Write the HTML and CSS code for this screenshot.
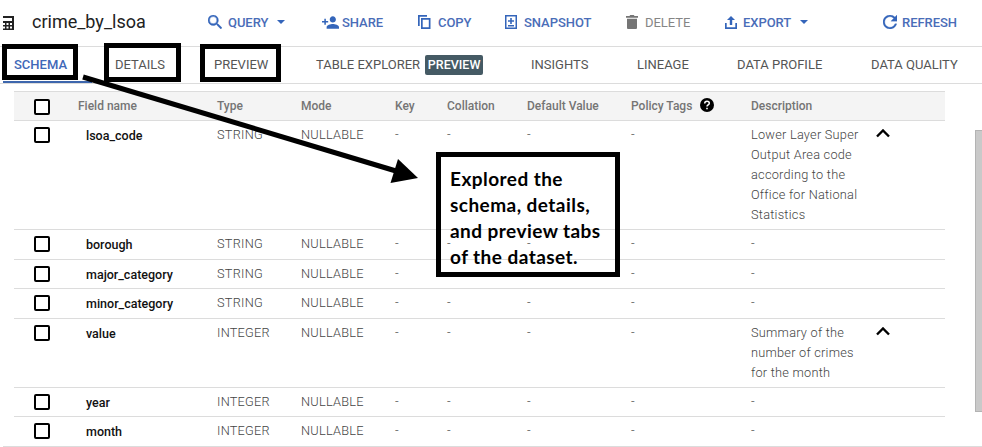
FILE: index.html
```html
<!DOCTYPE html>
<html lang="en">
<head>
<meta charset="utf-8">
<title>crime_by_lsoa</title>
<link rel="stylesheet" href="styles.css">
</head>
<body>
<header class="toolbar">
  <svg class="table-icon" width="11" height="14" viewBox="0 0 11 14"><path fill="#222" fill-rule="evenodd" d="M0 0h11v14H0v-1.500h2v-2H0V9h2V7H0V5h9V2H0zM3.500 7v2h2V7zM7 7v2h2V7zM3.500 10.500v2h2v-2zM7 10.500v2h2v-2z"/></svg>
  <h1 class="title">crime_by_lsoa</h1>
  <button class="action query"><svg width="14" height="14" viewBox="3 3 17.5 17.5"><path stroke-width=".5" stroke="currentColor" d="M15.5 14h-.79l-.28-.27A6.47 6.47 0 0 0 16 9.5 6.5 6.5 0 1 0 9.5 16c1.61 0 3.09-.59 4.23-1.57l.27.28v.79l5 4.99L20.49 19zM9.5 14a4.5 4.5 0 1 1 0-9 4.5 4.5 0 0 1 0 9z"/></svg><span>QUERY</span><i class="caret"></i></button>
  <button class="action share"><svg width="17" height="13" viewBox="1 4 22 16"><path d="M15 12c2.21 0 4-1.79 4-4s-1.79-4-4-4-4 1.79-4 4 1.790 4 4 4zM6 10V7H4v3H1v2h3v3h2v-3h3v-2zm9 4c-2.670 0-8 1.340-8 4v2h16v-2c0-2.660-5.330-4-8-4z"/></svg><span>SHARE</span></button>
  <button class="action copy"><svg width="13" height="14" viewBox="0 0 13 14"><path fill-rule="evenodd" d="M0 0h9v1.700H1.700V11H0zM3 3h9.500v11H3zM4.700 4.700v7.600h6.100V4.700z"/></svg><span>COPY</span></button>
  <button class="action snapshot"><svg width="12" height="14" viewBox="0 0 12 14"><path fill-rule="evenodd" d="M0 0h12v14H0zM1.500 1.500v11h9v-11zM5.200 3h1.600v2.200H9v1.600H6.800V9H5.200V6.800H3V5.200h2.200zM3 10h6v1.500H3z"/></svg><span>SNAPSHOT</span></button>
  <button class="action delete"><svg width="12" height="14" viewBox="0 0 12 14"><path d="M0 1h3.500l.7-1h3.600l.7 1H12v1.700H0zM1 3.700h10v9c0 .8-.5 1.300-1.300 1.300H2.300C1.500 14 1 13.500 1 12.700z"/></svg><span>DELETE</span></button>
  <button class="action export"><svg width="12" height="13" viewBox="0 0 12 13"><path d="M6 0l4 4H7.200v5H4.800V4H2zM0 7h1.700v4.200h8.600V7H12v6H0z"/></svg><span>EXPORT</span><i class="caret"></i></button>
  <button class="action refresh"><svg width="14" height="14" viewBox="4 4 16 16"><path stroke="currentColor" stroke-width=".3" d="M17.650 6.350C16.200 4.900 14.210 4 12 4c-4.420 0-7.990 3.580-7.990 8s3.570 8 7.990 8c3.730 0 6.840-2.550 7.730-6h-2.080c-.82 2.330-3.040 4-5.650 4-3.310 0-6-2.690-6-6s2.690-6 6-6c1.660 0 3.140.69 4.220 1.780L13 11h7V4z"/></svg><span>REFRESH</span></button>
</header>
<nav class="tabs">
  <a class="tab active"><span>SCHEMA</span></a>
  <a class="tab"><span>DETAILS</span></a>
  <a class="tab"><span>PREVIEW</span></a>
  <a class="tab"><span>TABLE EXPLORER</span><b class="chip">PREVIEW</b></a>
  <a class="tab"><span>INSIGHTS</span></a>
  <a class="tab"><span>LINEAGE</span></a>
  <a class="tab"><span>DATA PROFILE</span></a>
  <a class="tab"><span>DATA QUALITY</span></a>
</nav>
<main class="content">
  <section class="schema">
    <div class="row head"><i class="box"></i><span>Field name</span><span>Type</span><span>Mode</span><span>Key</span><span>Collation</span><span>Default Value</span><span class="policy">Policy Tags<svg width="14" height="14" viewBox="0 0 14 14"><circle cx="7" cy="7" r="7"/><path d="M4.700 5.500C4.700 4 5.600 3.200 7 3.200s2.300.8 2.300 2C9.300 6.800 7 6.900 7 8.500" fill="none" stroke="#fff" stroke-width="1.500"/><path fill="#fff" d="M6.200 9.700h1.600v1.500H6.200z"/></svg></span><span>Description</span></div>
    <div class="row"><i class="box"></i><span class="name">lsoa_code</span><span>STRING</span><span>NULLABLE</span><span>-</span><span>-</span><span>-</span><span>-</span><span>Lower Layer Super<br>Output Area code<br>according to the<br>Office for National<br>Statistics</span><svg class="chevron" width="14" height="9" viewBox="0 0 14 9"><path d="M1 7.500l6-6 6 6"/></svg></div>
    <div class="row tall"><i class="box"></i><span class="name">borough</span><span>STRING</span><span>NULLABLE</span><span>-</span><span>-</span><span>-</span><span>-</span><span>-</span></div>
    <div class="row"><i class="box"></i><span class="name">major_category</span><span>STRING</span><span>NULLABLE</span><span>-</span><span>-</span><span>-</span><span>-</span><span>-</span></div>
    <div class="row tall"><i class="box"></i><span class="name">minor_category</span><span>STRING</span><span>NULLABLE</span><span>-</span><span>-</span><span>-</span><span>-</span><span>-</span></div>
    <div class="row"><i class="box"></i><span class="name">value</span><span>INTEGER</span><span>NULLABLE</span><span>-</span><span>-</span><span>-</span><span>-</span><span>Summary of the<br>number of crimes<br>for the month</span><svg class="chevron" width="14" height="9" viewBox="0 0 14 9"><path d="M1 7.500l6-6 6 6"/></svg></div>
    <div class="row"><i class="box"></i><span class="name">year</span><span>INTEGER</span><span>NULLABLE</span><span>-</span><span>-</span><span>-</span><span>-</span><span>-</span></div>
    <div class="row last"><i class="box"></i><span class="name">month</span><span>INTEGER</span><span>NULLABLE</span><span>-</span><span>-</span><span>-</span><span>-</span><span>-</span></div>
  </section>
  <div class="scrollbar"></div>
</main>
<div class="bottom-rule"></div>
<div class="mark mark-schema"></div>
<div class="mark mark-details"></div>
<div class="mark mark-preview"></div>
<svg class="arrow" width="420" height="190" viewBox="0 0 420 190"><path d="M83 77L396 171" stroke="#000" stroke-width="5"/><path d="M418 178L398 159 390.500 183z"/></svg>
<div class="callout">Explored the<br>schema, details,<br>and preview tabs<br>of the dataset.</div>
</body>
</html>
```

FILE: styles.css
```css
* { box-sizing: border-box; }
body {
  margin: 0;
  width: 982px;
  height: 447px;
  overflow: hidden;
  position: relative;
  background: #fff;
  font-family: Roboto, sans-serif;
  color: #666;
}
.toolbar {
  display: grid;
  grid-template-columns: 29px 176px 114px 96px 87px 121px 99px 158px 1fr;
  padding-left: 3px;
  height: 47px;
  border-bottom: 1px solid #dcdcdc;
  align-items: center;
}
.title {
  margin: -3px 0 0;
  font-size: 18px;
  font-weight: 400;
  line-height: 24px;
  color: #222;
}
.action {
  display: flex;
  align-items: center;
  height: 20px;
  margin-top: 0;
  padding: 0;
  border: 0;
  background: none;
  font: 500 13px/20px Roboto, sans-serif;
  color: #4a6db8;
  letter-spacing: -.05px;
  white-space: nowrap;
}
.action svg { flex: none; margin-top: -2px; fill: #3465ba; color: #3465ba; margin-right: 6px; }
.share svg { margin-right: 3px; }
.copy svg { margin-right: 7px; }
.snapshot svg { margin-right: 7px; }
.delete svg { fill: #757575; margin-right: 7px; }
.refresh svg { margin-right: 5px; }
.delete { color: #858585; font-weight: 400; }
.caret {
  margin-left: 9px;
  margin-top: -2px;
  border: 4px solid transparent;
  border-top-color: #3465ba;
  border-bottom: 0;
}
.tabs {
  display: grid;
  grid-template-columns: 89px 99px 102px 215px 106px 100px 134px 1fr;
  padding-left: 3px;
  height: 37px;
  border-bottom: 1px solid #dcdcdc;
}
.tab {
  display: flex;
  align-items: center;
  padding: 0 0 1px 23px;
  font-size: 13px;
  white-space: nowrap;
  color: #555;
}
.tab.active {
  padding: 0 0 0 11px;
  border-bottom: 2px solid #3d66ad;
  color: #3f68b8;
  font-weight: 500;
}
.chip {
  margin-left: 5px;
  width: 58px;
  height: 20px;
  border-radius: 2px;
  background: #455a64;
  color: #fff;
  font-size: 12.5px;
  font-weight: 500;
  line-height: 20px;
  text-align: center;
}
.content {
  display: flex;
  justify-content: space-between;
  padding: 7px 0 0 14px;
  height: 362px;
}
.schema { width: 931px; }
.row {
  display: grid;
  grid-template-columns: 44px 139px 84px 94px 52px 80px 104px 120px 125px 1fr;
  align-items: start;
  padding: 4px 0 4px 20px;
  border-bottom: 1px solid #dcdcdc;
  font-size: 12.75px;
  font-weight: 300;
  line-height: 20px;
  letter-spacing: .24px;
  color: #444;
}
.row.tall { padding-bottom: 5px; }
.row.last { border-bottom: 0; }
.head {
  height: 30px;
  border-top: 1px solid #dcdcdc;
  background: #f4f4f4;
  font-size: 12px;
  font-weight: 500;
  letter-spacing: 0;
  color: #757575;
}
.box {
  width: 16px;
  height: 16px;
  margin-top: 2px;
  border: 2px solid #000;
  border-radius: 2px;
}
.head .box { margin-top: 3px; background: #fff; }
.name { padding: 1px 0 0 8px; margin-bottom: -1px; font-size: 12.5px; font-weight: 500; letter-spacing: 0; color: #111; }
.policy { display: flex; align-items: center; gap: 8px; }
.policy svg { margin-top: -2px; }
.chevron { margin-top: 4px; fill: none; stroke: #000; stroke-width: 2.4; }
.scrollbar {
  width: 7px;
  height: 282px;
  margin-top: 39px;
  border: 1px solid #b3b3b3;
  border-right: 0;
  background: #c9c9c9;
}
.bottom-rule { height: 1px; margin-left: 3px; background: #dcdcdc; }
.mark { position: absolute; border: 5px solid #000; }
.mark-schema { left: 2px; top: 44px; width: 76px; height: 36px; }
.mark-details { left: 104px; top: 43px; width: 77px; height: 39px; }
.mark-preview { left: 200px; top: 44px; width: 81px; height: 38px; }
.arrow { position: absolute; left: 0; top: 0; }
.callout {
  position: absolute;
  left: 436px;
  top: 152px;
  width: 184px;
  height: 125px;
  padding: 9px 0 0 9px;
  border: 5px solid #000;
  font: 700 19px/26px Lato, sans-serif;
  letter-spacing: .45px;
  color: #000;
  white-space: nowrap;
}
```
